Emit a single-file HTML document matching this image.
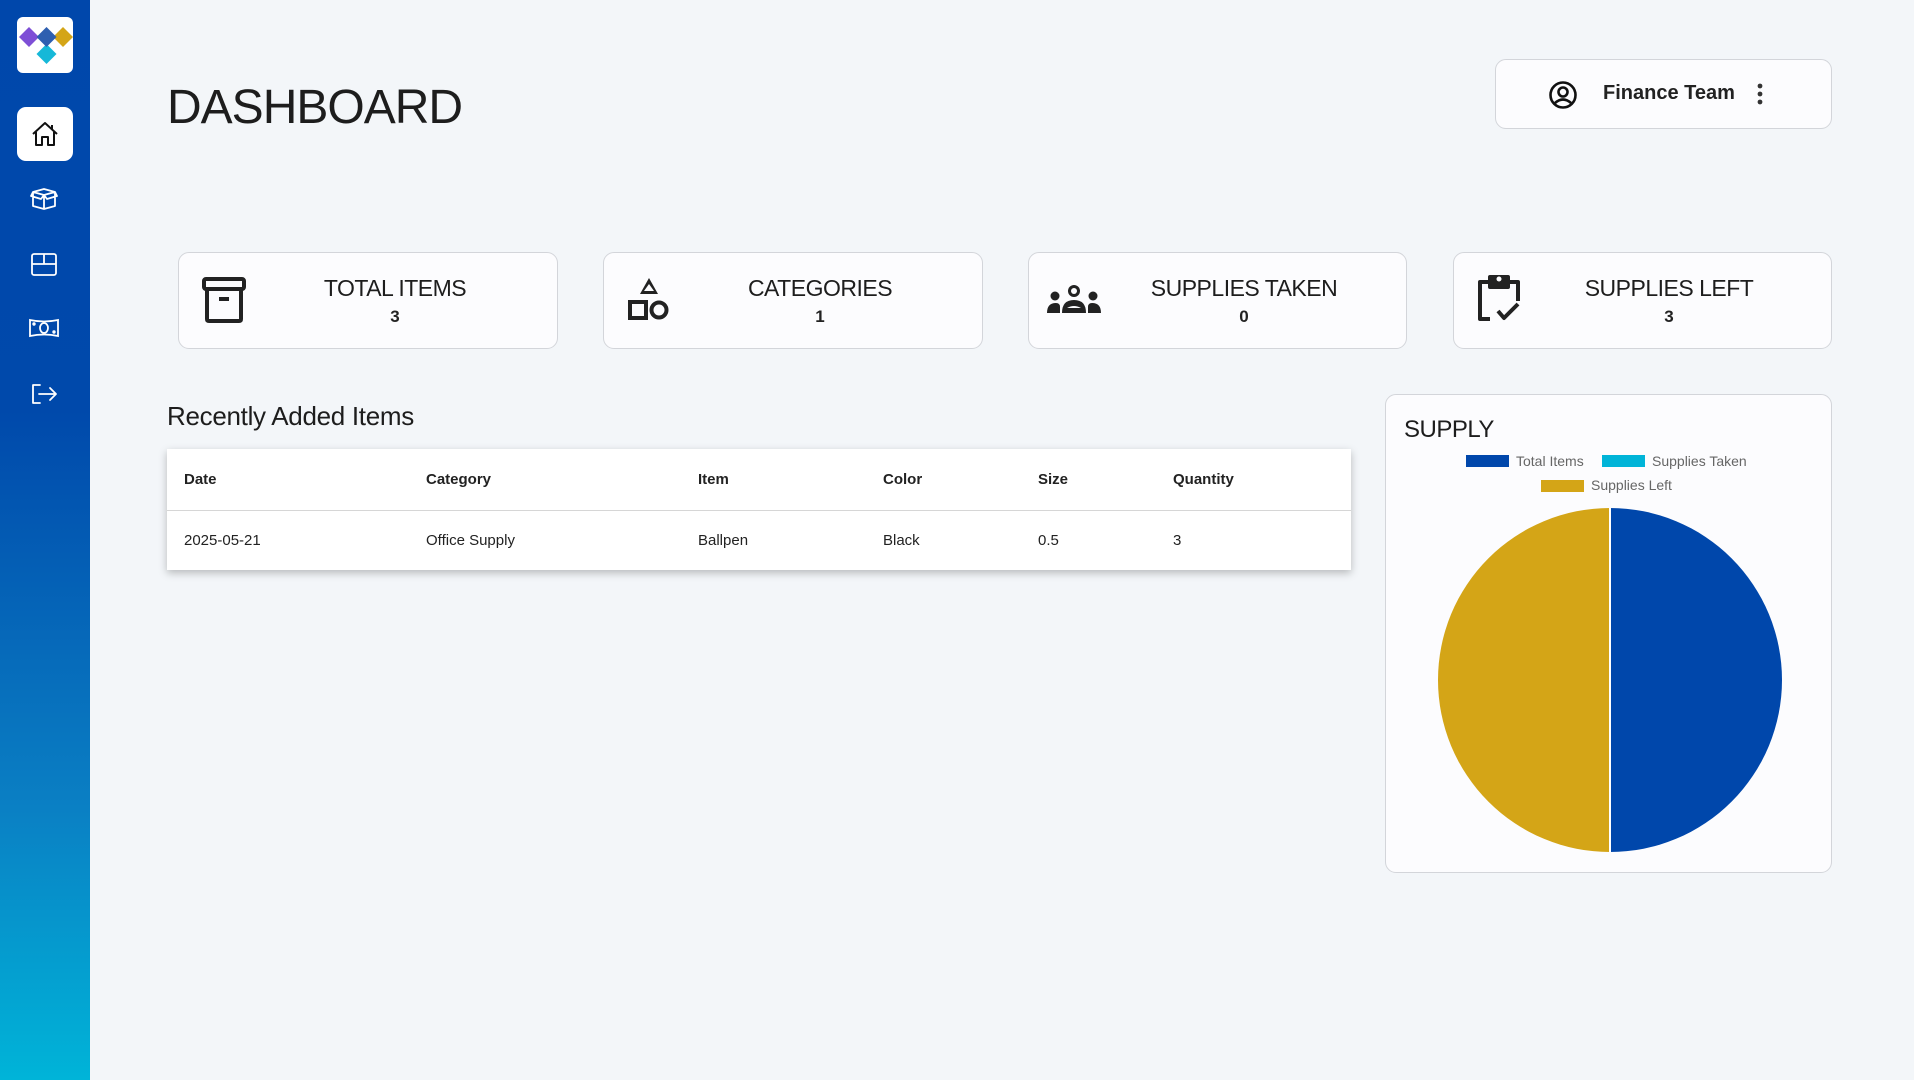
<!DOCTYPE html>
<html><head><meta charset="utf-8"><style>
*{margin:0;padding:0;box-sizing:border-box}
body{width:1914px;height:1080px;background:#f3f6f9;font-family:"Liberation Sans",sans-serif;color:#222;position:relative;overflow:hidden}
.side{position:absolute;left:0;top:0;width:90px;height:1080px;background:linear-gradient(180deg,#0047ab 0%,#0049ab 38%,#0a80c4 75%,#00b4d8 100%)}
.abs{position:absolute}
.card{position:absolute;background:#fcfcfe;border:1px solid #d3d5da;border-radius:11px}
.ct{position:absolute;text-align:center;width:300px;font-size:23px;color:#1d1d1d;letter-spacing:-0.5px}
.cn{position:absolute;text-align:center;width:300px;font-size:17px;font-weight:bold;color:#222}
.th{position:absolute;top:471px;font-size:15px;font-weight:bold;color:#222}
.td{position:absolute;top:532px;font-size:15px;color:#222}
</style></head><body>
<div class="side">
 <div class="abs" style="left:17px;top:17px;width:56px;height:56px;background:#fff;border-radius:6px">
  <svg width="56" height="56" viewBox="0 0 56 56">
   <polygon points="12,10 22,20 12,30 2,20" fill="#7e4fd6"/>
   <polygon points="46,10 56,20 46,30 36,20" fill="#d4a517"/>
   <polygon points="29.5,27 39.5,37 29.5,47 19.5,37" fill="#16b8d8"/>
   <polygon points="29.5,10 39.5,20 29.5,30 19.5,20" fill="#2e5fb0"/>
  </svg>
 </div>
 <div class="abs" style="left:17px;top:107px;width:56px;height:54px;background:#fff;border-radius:9px">
  <svg width="56" height="54" viewBox="0 0 56 54" fill="none" stroke="#111" stroke-width="2" stroke-linejoin="round"><path d="M16 27 L28 16 L40 27 M19 25 V38 H25 V30 H31 V38 H37 V25 M35 18 V22"/></svg>
 </div>
 <svg class="abs" style="left:30px;top:185px" width="28" height="26" viewBox="0 0 28 26" fill="none" stroke="#fff" stroke-width="1.8" stroke-linejoin="round"><path d="M3 7 L14 4 L25 7 L14 10 Z M3 7 V21 L14 24 L25 21 V7 M14 10 V24 M3 7 L1 11 L11 14 L14 10 M25 7 L27 11 L17 14 L14 10"/></svg>
 <svg class="abs" style="left:30px;top:251px" width="28" height="26" viewBox="0 0 28 26" fill="none" stroke="#fff" stroke-width="1.8" stroke-linejoin="round"><rect x="2" y="3" width="24" height="21" rx="2"/><path d="M2 13 H26 M14 3 V13"/></svg>
 <svg class="abs" style="left:28px;top:316px" width="32" height="24" viewBox="0 0 32 24" fill="none" stroke="#fff" stroke-width="1.8"><path d="M2 4 Q16 7 30 4 V20 Q16 17 2 20 Z"/><ellipse cx="16" cy="12" rx="4" ry="5"/><circle cx="6" cy="8" r="0.8"/><circle cx="26" cy="16" r="0.8"/></svg>
 <svg class="abs" style="left:30px;top:382px" width="28" height="24" viewBox="0 0 28 24" fill="none" stroke="#fff" stroke-width="1.8" stroke-linecap="round" stroke-linejoin="round"><path d="M10 3 H3 V21 H10 M9 12 H26 M20 6 L26 12 L20 18"/></svg>
</div>

<div class="abs" style="left:167px;top:80px;font-size:48px;color:#1d1d1d;letter-spacing:-1px">DASHBOARD</div>

<div class="card" style="left:1495px;top:59px;width:337px;height:70px">
 <svg class="abs" style="left:52px;top:20px" width="30" height="30" viewBox="0 0 30 30" fill="none" stroke="#111" stroke-width="2.6"><circle cx="15" cy="15" r="12.5"/><circle cx="15" cy="12" r="4.5"/><path d="M7 23 Q15 16 23 23"/></svg>
 <div class="abs" style="left:107px;top:22px;font-size:20px;font-weight:bold;color:#222">Finance Team</div>
 <svg class="abs" style="left:260px;top:22px" width="8" height="26"><circle cx="4" cy="4" r="2.4" fill="#333"/><circle cx="4" cy="12" r="2.4" fill="#333"/><circle cx="4" cy="20" r="2.4" fill="#333"/></svg>
</div>

<div class="card" style="left:178px;top:252px;width:380px;height:97px">
 <svg class="abs" style="left:22px;top:23px" width="46" height="48" viewBox="0 0 46 48" fill="none" stroke="#222" stroke-width="4"><rect x="3" y="3" width="40" height="10" rx="2"/><path d="M6 13 V43 Q6 45 8 45 H38 Q40 45 40 43 V13"/><path d="M18 23 H28" stroke-width="4"/></svg>
 <div class="ct" style="left:66px;top:22px">TOTAL ITEMS</div>
 <div class="cn" style="left:66px;top:54px">3</div>
</div>
<div class="card" style="left:603px;top:252px;width:380px;height:97px">
 <svg class="abs" style="left:22px;top:23px" width="46" height="48" viewBox="0 0 46 48" fill="#222"><path d="M23 2 L32 18 H14 Z M23 8 L18 15 H28 Z" fill-rule="evenodd"/><rect x="4" y="26" width="16" height="16" fill="none" stroke="#222" stroke-width="4"/><circle cx="33" cy="34" r="7.5" fill="none" stroke="#222" stroke-width="4"/></svg>
 <div class="ct" style="left:66px;top:22px">CATEGORIES</div>
 <div class="cn" style="left:66px;top:54px">1</div>
</div>
<div class="card" style="left:1028px;top:252px;width:379px;height:97px">
 <svg class="abs" style="left:17px;top:30px" width="56" height="36" viewBox="0 0 56 36" fill="#222"><circle cx="28" cy="8" r="6"/><circle cx="28" cy="8" r="3" fill="#fcfcfe"/><path d="M16 30 Q16 17 28 17 Q40 17 40 30 Z"/><path d="M21 25 Q28 21 35 25 Z" fill="#fcfcfe"/><circle cx="9" cy="13" r="4.5"/><circle cx="47" cy="13" r="4.5"/><path d="M1 30 Q1 20 10 20 Q14 20 14 24 V30 Z M55 30 Q55 20 46 20 Q42 20 42 24 V30 Z"/></svg>
 <div class="ct" style="left:65px;top:22px">SUPPLIES TAKEN</div>
 <div class="cn" style="left:65px;top:54px">0</div>
</div>
<div class="card" style="left:1453px;top:252px;width:379px;height:97px">
 <svg class="abs" style="left:22px;top:20px" width="46" height="52" viewBox="0 0 46 52" fill="none" stroke="#222" stroke-width="4" stroke-linejoin="round"><path d="M12 9 H4 V46 H14"/><path d="M34 9 H42 V28"/><path d="M14 4 H32 V14 H14 Z" fill="#222"/><circle cx="23" cy="6" r="2.5" fill="#fcfcfe" stroke="none"/><path d="M22 38 L28 45 L42 31"/></svg>
 <div class="ct" style="left:65px;top:22px">SUPPLIES LEFT</div>
 <div class="cn" style="left:65px;top:54px">3</div>
</div>

<div class="abs" style="left:167px;top:401px;font-size:26px;color:#1d1d1d;letter-spacing:-0.3px">Recently Added Items</div>
<div class="abs" style="left:167px;top:449px;width:1184px;height:121px;background:#fff;box-shadow:0 3px 8px rgba(0,0,0,.25)">
 <div class="abs" style="left:0;top:61px;width:100%;height:1px;background:#d6d6d6"></div>
</div>
<div class="th" style="left:184px">Date</div><div class="th" style="left:426px">Category</div><div class="th" style="left:698px">Item</div><div class="th" style="left:883px">Color</div><div class="th" style="left:1038px">Size</div><div class="th" style="left:1173px">Quantity</div>
<div class="td" style="left:184px">2025-05-21</div><div class="td" style="left:426px">Office Supply</div><div class="td" style="left:698px">Ballpen</div><div class="td" style="left:883px">Black</div><div class="td" style="left:1038px">0.5</div><div class="td" style="left:1173px">3</div>

<div class="card" style="left:1385px;top:394px;width:447px;height:479px">
 <div class="abs" style="left:18px;top:21px;font-size:24px;color:#1d1d1d;letter-spacing:-0.5px">SUPPLY</div>
 <div class="abs" style="left:80px;top:60px;width:43px;height:12px;background:#0047ab"></div>
 <div class="abs" style="left:130px;top:58px;font-size:14px;color:#666">Total Items</div>
 <div class="abs" style="left:216px;top:60px;width:43px;height:12px;background:#00b4d8"></div>
 <div class="abs" style="left:266px;top:58px;font-size:14px;color:#666">Supplies Taken</div>
 <div class="abs" style="left:155px;top:85px;width:43px;height:12px;background:#d4a517"></div>
 <div class="abs" style="left:205px;top:82px;font-size:14px;color:#666">Supplies Left</div>
 <svg class="abs" style="left:50px;top:111px" width="348" height="348" viewBox="0 0 348 348"><path d="M174 2 A172 172 0 0 1 174 346 Z" fill="#0047ab"/><path d="M174 2 A172 172 0 0 0 174 346 Z" fill="#d4a517"/><path d="M174 2 V346" stroke="#fff" stroke-width="2"/></svg>
</div>
</body></html>
